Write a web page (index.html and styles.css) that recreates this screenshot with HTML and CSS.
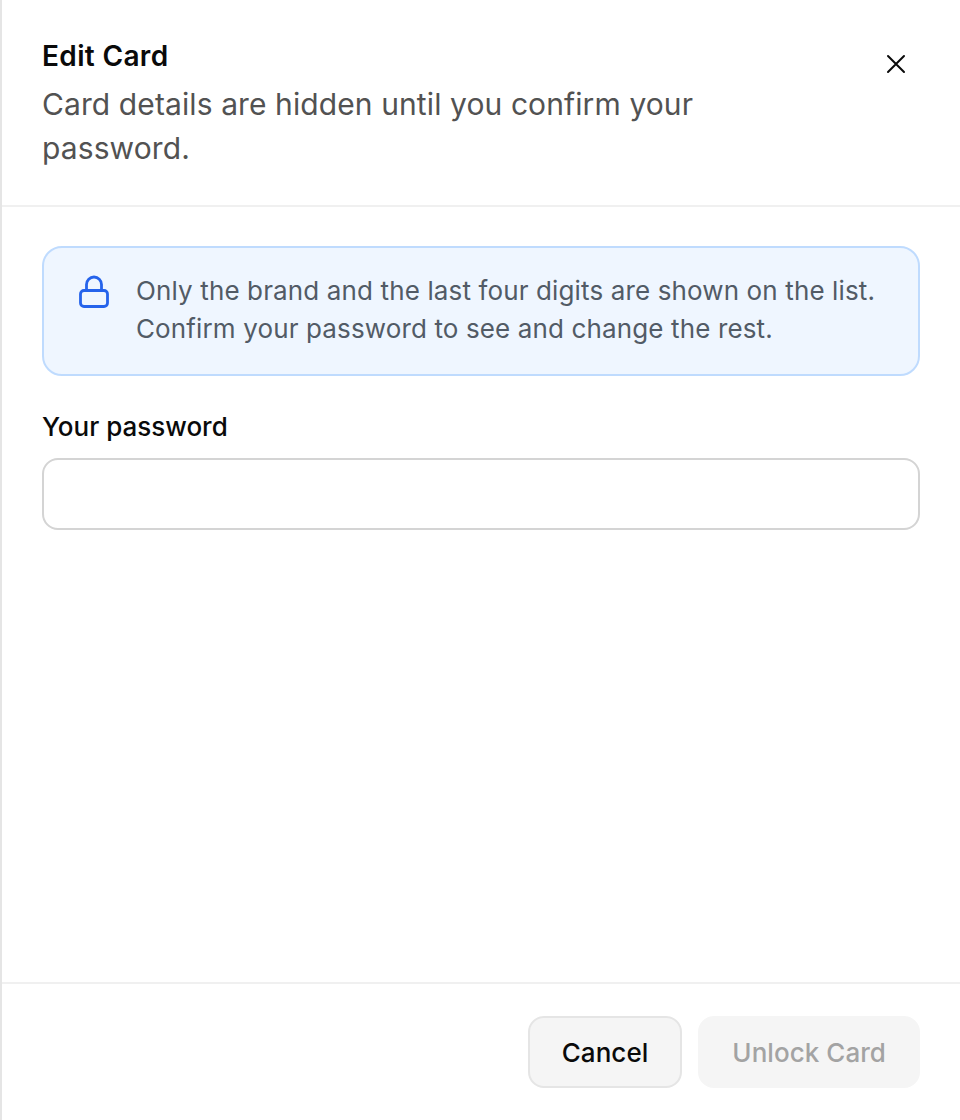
FILE: index.html
```html
<!DOCTYPE html>
<html lang="en">
<head>
    <meta charset="UTF-8">
    <meta name="viewport" content="width=device-width, initial-scale=1.0">
    <link rel="stylesheet" href="styles.css">
    <title>Edit Card</title>
</head>
<body>
    <div class="panel">
        <div class="panel-header">
            <div class="header-text">
                <h2 class="panel-title">Edit Card</h2>
                <p class="panel-desc">Card details are hidden until you confirm your password.</p>
            </div>
            <button class="close-btn" aria-label="Close">
                <svg width="24" height="24" viewBox="0 0 24 24" fill="none" stroke="#0a0a0a" stroke-width="2" stroke-linecap="round"><path d="M4 4l16 16M20 4L4 20"/></svg>
            </button>
        </div>
        <div class="panel-body">
            <div class="notice">
                <svg class="notice-icon" width="32" height="36" viewBox="0 0 32 36" fill="none" stroke="#2563eb" stroke-width="2.8" stroke-linejoin="round"><rect x="2.5" y="18.5" width="27" height="16" rx="3.5"/><path d="M8.5 18.5v-6a7.5 7.5 0 0 1 15 0v6"/></svg>
                <p class="notice-text">Only the brand and the last four digits are shown on the list. Confirm your password to see and change the rest.</p>
            </div>
            <label class="field-label" for="password">Your password</label>
            <input class="field-input" type="password" id="password">
        </div>
        <div class="panel-footer">
            <button class="btn btn-cancel">Cancel</button>
            <button class="btn btn-unlock" disabled>Unlock Card</button>
        </div>
    </div>
</body>
</html>
```

FILE: styles.css
```css
* {
    box-sizing: border-box;
}

html, body {
    height: 100%;
}

body {
    margin: 0;
    background-color: #fff;
    font-family: Inter, "Liberation Sans", sans-serif;
}

.panel {
    display: flex;
    flex-direction: column;
    height: 1120px;
    border-left: 2px solid #e5e5e5;
}

.panel-header {
    display: flex;
    justify-content: space-between;
    align-items: flex-start;
    height: 207px;
    padding: 38px 40px 0;
    border-bottom: 2px solid #f0f0f0;
}

.header-text {
    width: 680px;
}

.panel-title {
    margin: 0 0 8px;
    font-size: 28px;
    line-height: 36px;
    font-weight: 600;
    letter-spacing: 0.35px;
    color: #0a0a0a;
}

.panel-desc {
    margin: 0;
    font-size: 30px;
    line-height: 44px;
    letter-spacing: 0.1px;
    color: #525252;
}

.close-btn {
    display: flex;
    margin: 14px 12px 0 0;
    padding: 0;
    border: none;
    background: none;
    cursor: pointer;
}

.panel-body {
    flex: 1;
    padding: 39px 40px 0;
}

.notice {
    display: flex;
    align-items: flex-start;
    gap: 26px;
    height: 130px;
    padding: 24px 34px;
    background-color: #eff6ff;
    border: 2px solid #bfdbfe;
    border-radius: 20px;
}

.notice-icon {
    flex-shrink: 0;
}

.notice-text {
    margin: 0;
    font-size: 26px;
    line-height: 38px;
    letter-spacing: 0.13px;
    color: #525b66;
}

.field-label {
    display: block;
    margin: 32px 0 12px;
    font-size: 26px;
    line-height: 38px;
    font-weight: 460;
    color: #0a0a0a;
}

.field-input {
    display: block;
    width: 100%;
    height: 72px;
    background-color: #fff;
    border: 2px solid #d4d4d4;
    border-radius: 16px;
}

.panel-footer {
    display: flex;
    justify-content: flex-end;
    gap: 16px;
    height: 138px;
    padding: 32px 40px 0;
    border-top: 2px solid #f0f0f0;
}

.btn {
    height: 72px;
    padding: 0 32px;
    border-radius: 16px;
    font-family: inherit;
    font-size: 26px;
    font-weight: 460;
    letter-spacing: 0.05px;
    background-color: #f5f5f5;
    cursor: pointer;
}

.btn-cancel {
    border: 2px solid #e5e5e5;
    color: #0a0a0a;
}

.btn-unlock {
    border: 2px solid #f5f5f5;
    color: #a3a3a3;
    cursor: default;
}
```
